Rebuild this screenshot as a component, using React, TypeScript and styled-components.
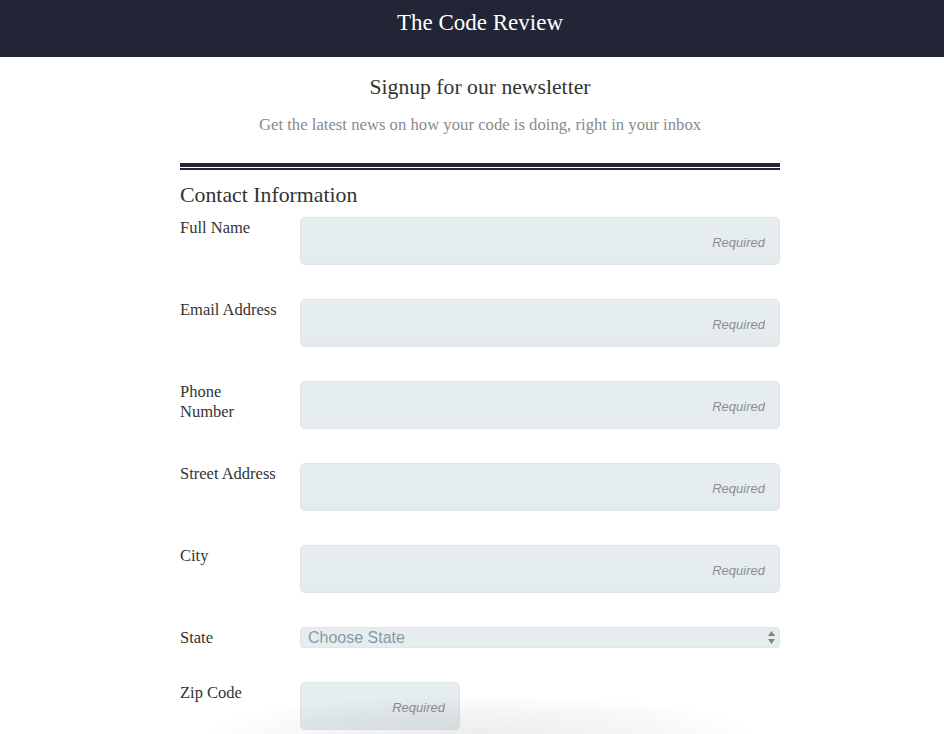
import React from "react";
import styled, { createGlobalStyle } from "styled-components";

const Global = createGlobalStyle`
  html, body { margin: 0; padding: 0; background: #fff; overflow-x: hidden; }
  body { font-family: "Liberation Serif", "Times New Roman", serif; color: #333; min-width: 960px; }
  * { box-sizing: border-box; }
`;

const Header = styled.header`
  height: 57px;
  background: #222536;
  display: flex;
  justify-content: center;
  padding-top: 9px;
`;

const Brand = styled.h1`
  margin: 0;
  color: #fff;
  font-size: 23px;
  line-height: 28px;
  font-weight: normal;
`;

const Main = styled.main`
  width: 600px;
  margin: 0 auto;
  padding-top: 15px;
`;

const Title = styled.h2`
  margin: 0;
  text-align: center;
  font-size: 21.7px;
  font-weight: normal;
  color: #333;
  line-height: 30px;
`;

const Subtitle = styled.p`
  margin: 12px 0 0;
  text-align: center;
  font-size: 16.7px;
  color: #8a8a8a;
  line-height: 22px;
`;

const Rule = styled.div`
  margin-top: 27px;
  border-top: 4px solid #222536;
  height: 7px;
  border-bottom: 2px solid #222536;
`;

const Section = styled.h3`
  margin: 11px 0 0;
  font-size: 21.8px;
  font-weight: normal;
  color: #333;
  line-height: 28px;
`;

const Rows = styled.div`
  display: flex;
  flex-direction: column;
  gap: 34px;
  margin-top: 8px;
`;

const Row = styled.div`
  display: grid;
  grid-template-columns: 120px 1fr;
  align-items: start;
`;

const Label = styled.label<{ $pt?: number }>`
  font-size: 16.5px;
  line-height: 20px;
  color: #333;
  white-space: pre-line;
  padding-top: ${(p) => p.$pt ?? 0}px;
  padding-right: 12px;
`;

const Input = styled.input<{ $w?: number }>`
  height: 48px;
  width: ${(p) => (p.$w ? `${p.$w}px` : "100%")};
  border: 1px solid #dfe6e8;
  border-radius: 5px;
  background: linear-gradient(#e7eef0, #e4ebed);
  padding: 2px 14px 0;
  text-align: right;
  font-family: "Liberation Sans", Arial, sans-serif;
  font-size: 13px;
  outline: none;
  &::placeholder {
    color: #8e8e8e;
    font-style: italic;
  }
`;

const SelectWrap = styled.div`
  position: relative;
  height: 21px;
`;

const Select = styled.select`
  appearance: none;
  width: 100%;
  height: 21px;
  border: 1px solid #dfe6e8;
  border-radius: 4px;
  background: #e6edef;
  padding: 0 7px;
  font-family: "Liberation Sans", Arial, sans-serif;
  font-size: 16px;
  color: #8a999f;
  line-height: 19px;
`;

const Arrows = styled.svg`
  position: absolute;
  right: 4px;
  top: 3px;
  pointer-events: none;
`;

const Shade = styled.div`
  position: fixed;
  left: 200px;
  width: 560px;
  bottom: -40px;
  height: 80px;
  pointer-events: none;
  background: radial-gradient(ellipse at center, rgba(0,0,0,0.07) 0%, rgba(0,0,0,0.03) 45%, rgba(0,0,0,0) 70%);
`;

const fields: { label: string; pt?: number }[] = [
  { label: "Full Name", pt: 1 },
  { label: "Email Address", pt: 1 },
  { label: "Phone\nNumber", pt: 1 },
  { label: "Street Address", pt: 1 },
  { label: "City", pt: 1 },
];

export default function App() {
  return (
    <>
      <Global />
      <Header>
        <Brand>The Code Review</Brand>
      </Header>
      <Main>
        <Title>Signup for our newsletter</Title>
        <Subtitle>Get the latest news on how your code is doing, right in your inbox</Subtitle>
        <Rule />
        <Section>Contact Information</Section>
        <Rows>
          {fields.map((f) => (
            <Row key={f.label}>
              <Label $pt={f.pt}>{f.label}</Label>
              <Input placeholder="Required" />
            </Row>
          ))}
          <Row>
            <Label $pt={1}>State</Label>
            <SelectWrap>
              <Select defaultValue="">
                <option value="" disabled>Choose State</option>
              </Select>
              <Arrows width="9" height="15" viewBox="0 0 9 15">
                <path d="M4.5 1 L8 6 L1 6 Z" fill="#7d858a" />
                <path d="M4.5 14 L8 9 L1 9 Z" fill="#7d858a" />
              </Arrows>
            </SelectWrap>
          </Row>
          <Row>
            <Label $pt={1}>Zip Code</Label>
            <Input placeholder="Required" $w={160} />
          </Row>
        </Rows>
      </Main>
      <Shade />
    </>
  );
}
